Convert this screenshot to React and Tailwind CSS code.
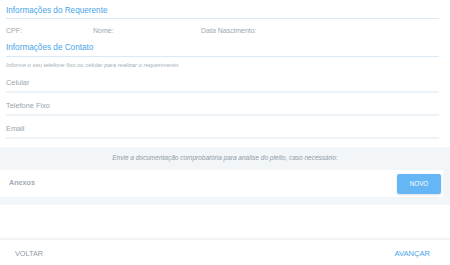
import React from "react";

function Field({ label }) {
  return (
    <div className="h-[23px] flex items-end pb-[3px] border-b-2 border-[#eef3f8] mr-[5px]">
      <span className="text-[7.4px] leading-[10px] text-[#97a3ad]">{label}</span>
    </div>
  );
}

function App() {
  return (
    <div
      className="w-[450px] h-[265px] bg-white flex flex-col overflow-hidden"
      style={{ fontFamily: '"Liberation Sans", Arial, sans-serif' }}
    >
      <div className="px-[6px] pt-[5px]">
        <h2 className="text-[8.2px] text-[#48a5e8] leading-[12px] pb-[1px] border-b border-[#d8eaf8] mr-[5px]">
          Informações do Requerente
        </h2>
        <div className="flex text-[7px] text-[#9ca8b1] h-[24px] items-center">
          <span className="w-[87px] shrink-0">CPF:</span>
          <span className="w-[108px] shrink-0">Nome:</span>
          <span>Data Nascimento:</span>
        </div>
        <h2 className="text-[8.2px] text-[#48a5e8] leading-[10px] pb-[3px] border-b border-[#d8eaf8] mr-[5px]">
          Informações de Contato
        </h2>
        <p className="text-[5.9px] italic text-[#a3aeb6] mt-[4px] leading-[8px]">
          Informe o seu telefone fixo ou celular para realizar o requerimento
        </p>
        <div className="mt-[1px]">
          <Field label="Celular" />
          <Field label="Telefone Fixo" />
          <Field label="Email" />
        </div>
      </div>
      <div className="mt-[8px] bg-[#f3f6f9] pt-[6px] pb-[8px]">
        <p className="text-center italic text-[6.5px] text-[#8f9ba5] leading-[10px]">
          Envie a documentação comprobatória para análise do pleito, caso necessário:
        </p>
        <div className="mt-[7px] mr-[7px] bg-white h-[27px] flex items-center justify-between pl-[9px] pr-[2px]">
          <span className="text-[7.2px] font-bold text-[#a0acb5]">Anexos</span>
          <button className="w-[44px] h-[20px] bg-[#65b6f5] text-white text-[6.3px] rounded-[2px] shadow-sm">
            NOVO
          </button>
        </div>
      </div>
      <div className="flex-1" />
      <div className="border-t-2 border-[#f1f3f6] h-[27px] pt-[3px] flex items-center justify-between pl-[15px] pr-[20px]">
        <span className="text-[7.3px] text-[#8f9ba5]">VOLTAR</span>
        <span className="text-[7.6px] text-[#48a5e8]">AVANÇAR</span>
      </div>
    </div>
  );
}

export default App;
